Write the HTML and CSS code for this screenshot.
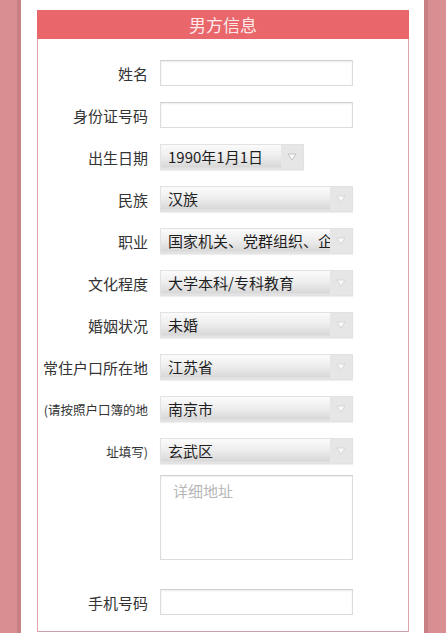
FILE: index.html
```html
<!DOCTYPE html>
<html lang="zh-CN">
<head>
<meta charset="utf-8">
<title>男方信息</title>
<link rel="stylesheet" href="styles.css">
</head>
<body>
<div class="page">
  <div class="card">
    <div class="card-head">男方信息</div>
    <div class="form">
      <div class="row"><label class="lbl">姓名</label><input class="inp" type="text"></div>
      <div class="row"><label class="lbl">身份证号码</label><input class="inp" type="text"></div>
      <div class="row"><label class="lbl">出生日期</label>
        <div class="select date"><span class="val">1990年1月1日</span><span class="arrow"><svg width="10" height="8" viewBox="0 0 10 8"><path d="M1 1 H9 L5 7 Z" fill="#fafafa" stroke="#b8b8b8" stroke-width="0.8"/></svg></span></div>
      </div>
      <div class="row"><label class="lbl">民族</label>
        <div class="select"><span class="val">汉族</span><span class="arrow"><svg width="10" height="8" viewBox="0 0 10 8"><path d="M1 1 H9 L5 7 Z" fill="#fafafa" stroke="#d0d0d0" stroke-width="0.8"/></svg></span></div>
      </div>
      <div class="row"><label class="lbl">职业</label>
        <div class="select"><span class="val">国家机关、党群组织、企业、事业单位负责人</span><span class="arrow"><svg width="10" height="8" viewBox="0 0 10 8"><path d="M1 1 H9 L5 7 Z" fill="#fafafa" stroke="#d0d0d0" stroke-width="0.8"/></svg></span></div>
      </div>
      <div class="row"><label class="lbl">文化程度</label>
        <div class="select"><span class="val">大学本科/专科教育</span><span class="arrow"><svg width="10" height="8" viewBox="0 0 10 8"><path d="M1 1 H9 L5 7 Z" fill="#fafafa" stroke="#d0d0d0" stroke-width="0.8"/></svg></span></div>
      </div>
      <div class="row"><label class="lbl">婚姻状况</label>
        <div class="select"><span class="val">未婚</span><span class="arrow"><svg width="10" height="8" viewBox="0 0 10 8"><path d="M1 1 H9 L5 7 Z" fill="#fafafa" stroke="#d0d0d0" stroke-width="0.8"/></svg></span></div>
      </div>
      <div class="row"><label class="lbl">常住户口所在地</label>
        <div class="select"><span class="val">江苏省</span><span class="arrow"><svg width="10" height="8" viewBox="0 0 10 8"><path d="M1 1 H9 L5 7 Z" fill="#fafafa" stroke="#d0d0d0" stroke-width="0.8"/></svg></span></div>
      </div>
      <div class="row"><label class="lbl small">(请按照户口簿的地</label>
        <div class="select"><span class="val">南京市</span><span class="arrow"><svg width="10" height="8" viewBox="0 0 10 8"><path d="M1 1 H9 L5 7 Z" fill="#fafafa" stroke="#d0d0d0" stroke-width="0.8"/></svg></span></div>
      </div>
      <div class="row"><label class="lbl small">址填写)</label>
        <div class="select"><span class="val">玄武区</span><span class="arrow"><svg width="10" height="8" viewBox="0 0 10 8"><path d="M1 1 H9 L5 7 Z" fill="#fafafa" stroke="#d0d0d0" stroke-width="0.8"/></svg></span></div>
      </div>
      <div class="row row-area"><span class="lbl"></span><textarea class="area" placeholder="详细地址"></textarea></div>
      <div class="row row-phone"><label class="lbl">手机号码</label><input class="inp" type="text"></div>
    </div>
  </div>
</div>
</body>
</html>
```
FILE: styles.css
```css
html, body {
  margin: 0;
  padding: 0;
}
body {
  background: #d98f91;
  font-family: "Noto Sans CJK SC", "Noto Sans", sans-serif;
  color: #333;
  height: 633px;
  overflow: hidden;
}
.page {
  margin: 0 18px 0 17px;
  border-left: 4px solid #c98084;
  border-right: 4px solid #c98084;
  background: #fff;
  min-height: 633px;
  padding: 10px 15px 0 16px;
  box-sizing: border-box;
}
.card {
  border: 1px solid #e2a4ab;
  border-top: none;
  border-bottom-color: #c9a3a9;
  background: #fff;
}
.card-head {
  height: 29px;
  background: #e9666b;
  color: #fde9ea;
  font-size: 17px;
  line-height: 29px;
  text-align: center;
  margin: 0 -1px;
}
.form {
  display: flex;
  flex-direction: column;
  gap: 16px;
  padding: 21px 0 16px;
}
.row {
  display: flex;
  align-items: center;
  gap: 12px;
  height: 26px;
}
.lbl {
  width: 110px;
  flex: none;
  text-align: right;
  font-size: 15px;
  color: #333;
  white-space: nowrap;
}
.lbl.small {
  font-size: 12.5px;
}
.inp {
  width: 193px;
  height: 26px;
  box-sizing: border-box;
  border: 1px solid #dcdcdc;
  border-top-color: #cfcfcf;
  box-shadow: inset 0 1px 2px rgba(0,0,0,0.08);
  background: #fff;
  margin: 0;
  padding: 0 6px;
  font-size: 15px;
  font-family: inherit;
  outline: none;
}
.select {
  width: 193px;
  height: 26px;
  box-sizing: border-box;
  display: flex;
  border: 1px solid #e2e2e2;
  background: linear-gradient(#fbfbfb 0%, #eeeeee 45%, #d9d9d9 90%, #e6e6e6 100%);
  box-shadow: 0 1px 1px rgba(0,0,0,0.06);
  overflow: hidden;
}
.select.date {
  width: 144px;
}
.val {
  flex: 1;
  min-width: 0;
  overflow: hidden;
  white-space: nowrap;
  padding-left: 7px;
  font-size: 15px;
  line-height: 24px;
  color: #1e1e1e;
}
.arrow {
  flex: none;
  width: 22px;
  display: flex;
  align-items: center;
  justify-content: center;
  background: #e6e6e6;
}
.row-area {
  height: 85px;
  margin-top: -5px;
  align-items: stretch;
}
.area {
  width: 193px;
  height: 85px;
  box-sizing: border-box;
  border: 1px solid #dcdcdc;
  border-top-color: #cfcfcf;
  box-shadow: inset 0 1px 2px rgba(0,0,0,0.06);
  margin: 0;
  padding: 4px 12px;
  font-size: 15px;
  font-family: inherit;
  resize: none;
  outline: none;
}
.area::placeholder {
  color: #b8b8b8;
}
.row-phone {
  margin-top: 13px;
}
```
